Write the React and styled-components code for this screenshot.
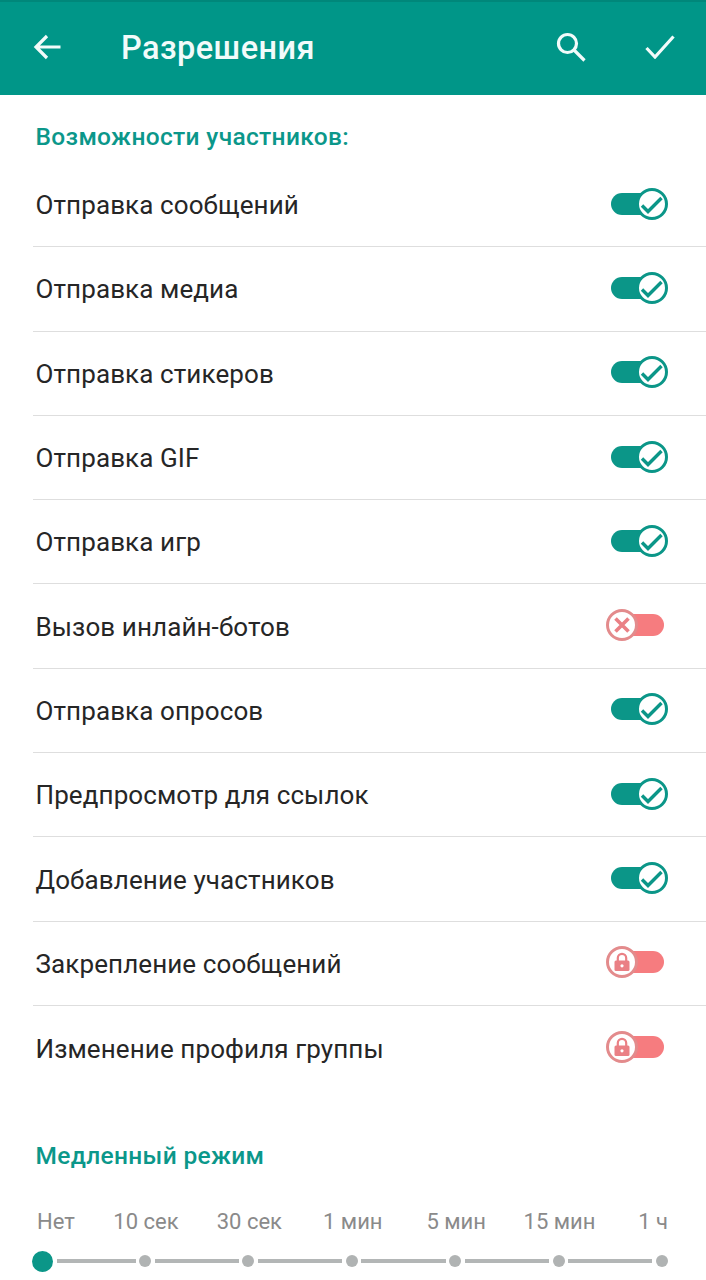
import React from 'react';
import styled, { createGlobalStyle } from 'styled-components';

const PERMISSIONS = [
  { label: 'Отправка сообщений', state: 'on' },
  { label: 'Отправка медиа', state: 'on' },
  { label: 'Отправка стикеров', state: 'on' },
  { label: 'Отправка GIF', state: 'on' },
  { label: 'Отправка игр', state: 'on' },
  { label: 'Вызов инлайн-ботов', state: 'off' },
  { label: 'Отправка опросов', state: 'on' },
  { label: 'Предпросмотр для ссылок', state: 'on' },
  { label: 'Добавление участников', state: 'on' },
  { label: 'Закрепление сообщений', state: 'locked' },
  { label: 'Изменение профиля группы', state: 'locked' },
];

const SLOW_MODE = ['Нет', '10 сек', '30 сек', '1 мин', '5 мин', '15 мин', '1 ч'];

const GlobalStyle = createGlobalStyle`
  html, body {
    margin: 0;
    padding: 0;
    background: #fff;
  }
  body {
    font-family: Roboto, "Liberation Sans", sans-serif;
    overflow: hidden;
  }
`;

const Page = styled.div`
  width: 706px;
  height: 1280px;
  overflow: hidden;
  background: #fff;
`;

const Toolbar = styled.header`
  height: 95px;
  box-sizing: border-box;
  display: flex;
  align-items: center;
  padding: 0 31px 3px 33px;
  background: #009688;
  border-top: 2px solid #00877a;
  color: #f2fbfa;
`;

const Title = styled.h1`
  margin: 2px 0 0 60px;
  flex: 1;
  font-size: 32.5px;
  font-weight: 500;
  letter-spacing: 0.45px;
`;

const ToolIcon = styled.svg`
  display: block;
  fill: none;
  stroke: currentColor;
  stroke-width: 3.2;
  margin-left: ${(p) => p.$gap || 0}px;
`;

const SectionTitle = styled.h2`
  margin: 0;
  padding: ${(p) => p.$top}px 0 0 35.5px;
  font-size: 24.5px;
  line-height: 30px;
  font-weight: 500;
  letter-spacing: 0.33px;
  color: #0b978a;
`;

const List = styled.ul`
  list-style: none;
  margin: 11px 0 0;
  padding: 0;
`;

const Row = styled.li`
  height: 84.3px;
  box-sizing: border-box;
  margin-left: 33px;
  padding: 1px 38px 0 2.5px;
  display: flex;
  align-items: center;
  justify-content: space-between;
  font-size: 26px;
  letter-spacing: 0.1px;
  color: #262626;
  border-bottom: 1px solid #dedede;

  &:last-child {
    border-bottom: none;
  }
`;

const Switch = styled.div`
  position: relative;
  width: ${(p) => (p.$on ? 50 : 52)}px;
  height: 22px;
  border-radius: 11px;
  margin: 0 ${(p) => (p.$on ? 7 : 4)}px 3px 0;
  background: ${(p) => (p.$on ? '#0b9688' : '#f67c7f')};
`;

const Knob = styled.div`
  position: absolute;
  top: -5px;
  ${(p) => (p.$on ? 'right: -7px;' : 'left: -6px;')}
  width: 32px;
  height: 32px;
  box-sizing: border-box;
  border-radius: 50%;
  background: #fff;
  border: 3px solid ${(p) => (p.$on ? '#0b9688' : '#e38b8c')};
  display: flex;
  align-items: center;
  justify-content: center;
  color: ${(p) => (p.$on ? '#0b9688' : '#ea8085')};
`;

const SlowLabels = styled.div`
  display: grid;
  grid-template-columns: 57.3px repeat(5, 103.4px) 1fr;
  width: 631px;
  margin: 38px 0 0 37px;
  font-size: 22px;
  line-height: 26px;
  color: #8a8a8a;
`;

const SlowLabel = styled.span`
  white-space: nowrap;
  text-align: ${(p) => p.$align};
`;

const Track = styled.div`
  display: flex;
  align-items: center;
  width: 632px;
  height: 22px;
  margin: 15px 0 0 36px;
`;

const Dot = styled.div`
  flex: none;
  width: ${(p) => (p.$active ? 21 : 12)}px;
  height: ${(p) => (p.$active ? 21 : 12)}px;
  margin: 0 ${(p) => (p.$active ? -4.5 : 0)}px;
  border-radius: 50%;
  background: ${(p) => (p.$active ? '#0b9688' : '#b0b3b3')};
`;

const Segment = styled.div`
  flex: none;
  width: ${(p) => (p.$first ? 78.5 : 84.4)}px;
  height: 4px;
  margin: 0 3.5px 0 ${(p) => (p.$first ? 9 : 3.5)}px;
  background: #b3b6b6;
`;

const SwitchIcon = ({ state }) => {
  if (state === 'on') {
    return (
      <svg width="26" height="26" viewBox="0 0 26 26" fill="none" stroke="currentColor" strokeWidth="3.4">
        <path d="M3 14.5l6 6L22.5 7" />
      </svg>
    );
  }
  if (state === 'off') {
    return (
      <svg width="20" height="20" viewBox="0 0 20 20" fill="none" stroke="currentColor" strokeWidth="3.6">
        <path d="M3.5 3.5l13 13M16.5 3.5l-13 13" />
      </svg>
    );
  }
  return (
    <svg width="20" height="22" viewBox="0 0 20 22">
      <path d="M5.8 10V7a4.2 4.2 0 0 1 8.4 0v3" fill="none" stroke="currentColor" strokeWidth="2.2" />
      <rect x="2.5" y="9.5" width="15" height="10.5" rx="1.5" fill="currentColor" />
      <circle cx="10" cy="14.8" r="1.6" fill="#fff" />
    </svg>
  );
};

const labelAlign = (index) => {
  if (index === 0) return 'left';
  if (index === SLOW_MODE.length - 1) return 'right';
  return 'center';
};

const App = () => {
  return (
    <Page>
      <GlobalStyle />

      <Toolbar>
        <ToolIcon width="28" height="28" viewBox="0 0 28 28">
          <path d="M27.5 14H3M14 3L3 14 14 25" />
        </ToolIcon>
        <Title>Разрешения</Title>
        <ToolIcon width="30" height="30" viewBox="0 0 30 30">
          <circle cx="11.5" cy="11.5" r="9" />
          <path d="M18 18l10.5 10.5" />
        </ToolIcon>
        <ToolIcon $gap={59} width="30" height="24" viewBox="0 0 30 24">
          <path d="M1.5 13l8.5 9L28.5 1.5" />
        </ToolIcon>
      </Toolbar>

      <SectionTitle $top={27}>Возможности участников:</SectionTitle>
      <List>
        {PERMISSIONS.map(({ label, state }) => {
          const isOn = state === 'on';
          return (
            <Row key={label}>
              {label}
              <Switch $on={isOn}>
                <Knob $on={isOn}>
                  <SwitchIcon state={state} />
                </Knob>
              </Switch>
            </Row>
          );
        })}
      </List>

      <SectionTitle $top={51}>Медленный режим</SectionTitle>
      <SlowLabels>
        {SLOW_MODE.map((label, i) => (
          <SlowLabel key={label} $align={labelAlign(i)}>
            {label}
          </SlowLabel>
        ))}
      </SlowLabels>
      <Track>
        {SLOW_MODE.map((label, i) => (
          <React.Fragment key={label}>
            {i > 0 && <Segment $first={i === 1} />}
            <Dot $active={i === 0} />
          </React.Fragment>
        ))}
      </Track>
    </Page>
  );
};

export default App;
